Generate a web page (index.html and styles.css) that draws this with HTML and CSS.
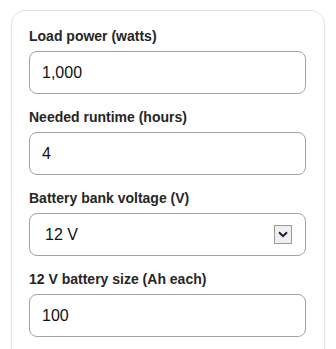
FILE: index.html
```html
<!DOCTYPE html>
<html lang="en">
<head>
    <meta charset="UTF-8">
    <meta name="viewport" content="width=device-width, initial-scale=1.0">
    <title>Battery bank calculator</title>
    <link rel="stylesheet" href="styles.css">
</head>
<body>

    <div class="card">
        <div class="field">
            <label for="loadPower">Load power (watts)</label>
            <input type="text" id="loadPower" value="1,000">
        </div>

        <div class="field">
            <label for="runtime">Needed runtime (hours)</label>
            <input type="text" id="runtime" value="4">
        </div>

        <div class="field">
            <label for="bankVoltage">Battery bank voltage (V)</label>
            <div class="select-wrap">
                <select id="bankVoltage">
                    <option value="12" selected>12 V</option>
                    <option value="24">24 V</option>
                    <option value="48">48 V</option>
                </select>
                <span class="select-arrow">
                    <svg width="10" height="7" viewBox="0 0 10 7"><path d="M1 1.2 L5 5.2 L9 1.2" fill="none" stroke="#1a1f3a" stroke-width="2"/></svg>
                </span>
            </div>
        </div>

        <div class="field">
            <label for="batterySize" id="sizeLabel">12 V battery size (Ah each)</label>
            <input type="text" id="batterySize" value="100">
        </div>
    </div>

</body>
</html>
```

FILE: styles.css
```css
body {
    font-family: "Liberation Sans", Arial, sans-serif;
    background-color: #ffffff;
    color: #222222;
    margin: 0;
    padding: 10px 11px;
}
.card {
    background-color: #ffffff;
    border: 1px solid #dde6e4;
    border-radius: 14px;
    padding: 17px 18px 17px 17px;
}
.field {
    margin-bottom: 15px;
}
label {
    display: block;
    font-size: 14px;
    line-height: 17px;
    font-weight: bold;
    color: #262626;
    margin-bottom: 6px;
}
input, select {
    display: block;
    box-sizing: border-box;
    width: 100%;
    height: 43px;
    padding: 0 12px;
    font-family: "Liberation Sans", Arial, sans-serif;
    font-size: 16px;
    color: #111111;
    background-color: #ffffff;
    border: 1px solid #9fa3a3;
    border-radius: 8px;
}
select {
    appearance: none;
    -webkit-appearance: none;
    padding-left: 15px;
}
.select-wrap {
    position: relative;
}
.select-arrow {
    position: absolute;
    right: 14px;
    top: 12px;
    width: 18px;
    height: 19px;
    box-sizing: border-box;
    border: 1px solid #9a9a9a;
    background-color: #efefef;
    display: flex;
    align-items: center;
    justify-content: center;
    pointer-events: none;
}
```
